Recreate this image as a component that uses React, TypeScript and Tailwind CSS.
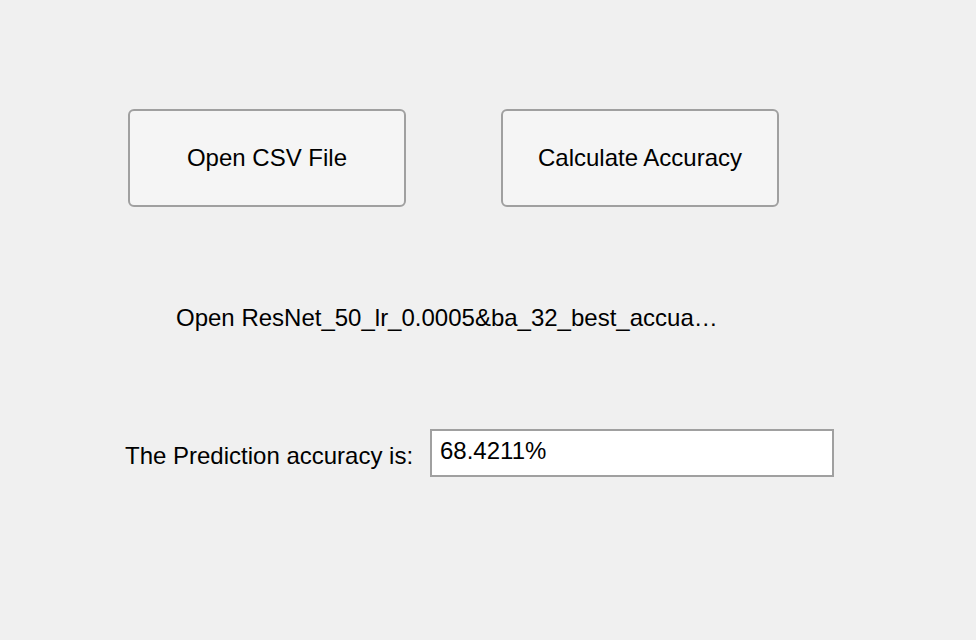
import React from "react";

export default function App() {
  return (
    <div
      className="w-[976px] h-[640px] bg-[#f0f0f0] text-black overflow-hidden"
      style={{ fontFamily: '"Liberation Sans", Arial, sans-serif' }}
    >
      <div className="pt-[109px] pl-[128px] flex gap-[95px]">
        <button className="w-[278px] h-[98px] border-2 border-[#a0a0a0] rounded-[6px] bg-[#f5f5f5] text-[24px] leading-[28px] text-black">
          Open CSV File
        </button>
        <button className="w-[278px] h-[98px] border-2 border-[#a0a0a0] rounded-[6px] bg-[#f5f5f5] text-[24px] leading-[28px] text-black">
          Calculate Accuracy
        </button>
      </div>
      <div className="mt-[97px] pl-[176px] text-[24px] leading-[28px] whitespace-nowrap">
        Open ResNet_50_lr_0.0005&amp;ba_32_best_accua…
      </div>
      <div className="mt-[97px] flex items-start">
        <div className="w-[430px] pl-[125px] mt-[13px] text-[24px] leading-[28px] whitespace-nowrap">
          The Prediction accuracy is:
        </div>
        <div className="w-[404px] h-[48px] border-2 border-[#a0a0a0] bg-white pl-[8px] pt-[6px] text-[24px] leading-[28px]">
          68.4211%
        </div>
      </div>
    </div>
  );
}
